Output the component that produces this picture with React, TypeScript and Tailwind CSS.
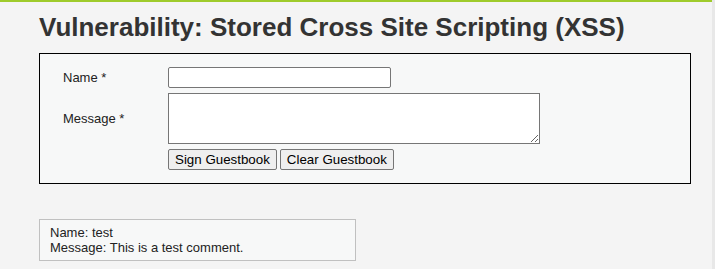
export default function App() {
  return (
    <div className="flex w-[715px] h-[269px] overflow-hidden bg-[#f4f4f4]" style={{ fontFamily: '"Liberation Sans", Arial, sans-serif' }}>
      <div className="w-[712px] shrink-0 border-t-2 border-[#9fcb2c] pl-[39px] pr-[21px]">
        <h1 className="mt-[10px] text-[26px] leading-[30px] font-bold text-[#333]">
          Vulnerability: Stored Cross Site Scripting (XSS)
        </h1>
        <div className="mt-[11px] border border-black bg-[#f7f8f8] h-[131px] pl-[23px] pt-[13px]">
          <div className="flex">
            <div className="w-[105px] text-[13px] text-[#222] leading-[21px]">Name *</div>
            <input className="w-[223px] h-[21px] border border-[#767676] rounded-[2px] bg-white" />
          </div>
          <div className="flex mt-[5px]">
            <div className="w-[105px] text-[13px] text-[#222] pt-[16px]">Message *</div>
            <textarea className="w-[372px] h-[51px] border border-[#767676] bg-white resize" />
          </div>
          <div className="flex gap-[3px] ml-[105px] mt-[5px]">
            <button className="h-[21px] px-[6px] text-[13.33px] text-black bg-[#efefef] border border-[#767676] rounded-[2px] leading-none">Sign Guestbook</button>
            <button className="h-[21px] px-[6px] text-[13.33px] text-black bg-[#efefef] border border-[#767676] rounded-[2px] leading-none">Clear Guestbook</button>
          </div>
        </div>
        <div className="mt-[35px] w-[317px] border border-[#c0c0c0] bg-[#f7f8f8] px-[10px] py-[5px] text-[13px] leading-[15px] text-[#222]">
          <div>Name: test</div>
          <div>Message: This is a test comment.</div>
        </div>
      </div>
      <div className="flex-1 bg-[#e8e8e8]" />
    </div>
  );
}
